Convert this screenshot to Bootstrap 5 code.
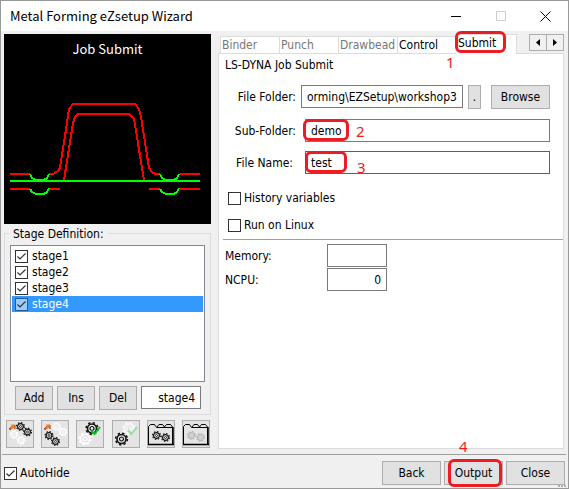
<!DOCTYPE html>
<html lang="en">
<head>
<meta charset="utf-8">
<meta name="viewport" content="width=device-width, initial-scale=1">
<title>Metal Forming eZsetup Wizard</title>
<link rel="stylesheet" href="https://cdn.jsdelivr.net/npm/bootstrap@5.3.0/dist/css/bootstrap.min.css">
<style>
body { font: 12px/16px "DejaVu Sans Condensed", "Noto Sans", sans-serif; color: #000; background: #f0f0f0; }
.wizard { border: 1px solid #999; padding-bottom: 3px; }
.titlebar { height: 30px; background: #fff; font: 13px/16px "Noto Sans CJK SC", sans-serif; padding-left: 9px; }
.titlebar button { width: 45px; height: 28px; }
.titlebar svg { display: block; margin: auto; }
.body-row { padding: 3px 4px 5px 3px; gap: 7px; }
.side { flex: 0 0 207px; }
.preview { background: #000; height: 190px; }
.heading { color: #fff; font: 13px/16px "Noto Sans CJK SC", sans-serif; top: 7px; }
.stage-box { border: 1px solid #dcdcdc; margin-top: 9px; padding: 11px 5px 4px; }
.stage-box legend { position: absolute; float: none; width: auto; top: -8px; left: 4px; padding: 0 4px; background: #f0f0f0; font-size: 12px; line-height: 16px; margin: 0; }
.stage-list { border: 1px solid #828790; background: #fff; height: 137px; padding: 2px 1px; }
.stage-list label { height: 16px; padding-left: 3px; gap: 4px; }
.stage-list label.picked { background: #3399ff; color: #fff; }
.tick { appearance: none; width: 13px; height: 13px; border: 1px solid #333; background: #fff; margin: 0; flex: none; }
.tick:checked { background: #fff url("data:image/svg+xml,%3Csvg xmlns='http://www.w3.org/2000/svg' viewBox='0 0 11 11'%3E%3Cpath d='M1.5 5.5 4 8 9.5 2.5' fill='none' stroke='%23333' stroke-width='1.2'/%3E%3C/svg%3E") center/11px no-repeat; }
.picked .tick:checked { background-color: #99ccff; border-color: #1f5c99; }
.stage-keys { padding: 0 4px 0 5px; }
.key { border: 1px solid #adadad; background: #e1e1e1; color: #000; height: 24px; padding: 0; line-height: 16px; font-size: 12px; border-radius: 0; text-align: center; }
.key.small-key { width: 38px; }
.key.wide-key { width: 59px; }
.key.dot-key { width: 13px; flex: none; margin: 0 10px 0 5px; }
.entry { border: 1px solid #7a7a7a; background: #fff; height: 23px; padding: 0 5px; line-height: 16px; font-size: 12px; color: #000; min-width: 0; border-radius: 0; outline: 0; }
.entry.narrow { width: 60px; }
.entry.active { border-color: #0078d7; }
.tools { padding: 5px 1px 0 2px; }
.tools button { width: 28px; height: 28px; border: 1px solid #adadad; background: #e4e4e4; padding: 0; }
.tools svg { display: block; margin: -1px; }
.tabstrip { height: 19px; padding-left: 2px; }
.tabstrip .tab { width: 59px; height: 17px; border: 1px solid #dcdcdc; border-bottom: 0; border-right: 0; background: #fff; color: #777; padding: 0 0 0 1px; text-align: left; line-height: 16px; }
.tabstrip .tab.ready { color: #000; }
.tabstrip .tab.current { color: #000; width: 61px; height: 20px; border-left: 0; border-right: 1px solid #dcdcdc; padding-left: 2px; padding-bottom: 3px; }
.scroller button { width: 18px; height: 17px; border: 1px solid #adadad; background: #f0f0f0; padding: 0; }
.scroller button + button { margin-left: -1px; }
.scroller svg { display: block; margin: auto; }
.page { border: 1px solid #dcdcdc; background: #fff; }
.form-area { padding: 3px 13px 0 6px; }
.form-grid { display: grid; grid-template-columns: 71px 1fr; column-gap: 5px; margin-top: 12px; }
.form-grid > label { text-align: right; align-self: start; margin-top: 4px; }
.form-grid .name { padding-right: 3px; }
.folder-row { height: 34px; }
.field-row { height: 32px; padding-left: 4px; }
.tick-row { gap: 3px; height: 16px; }
.tick-row.first { margin: 7px 0 0 3px; }
.tick-row.second { margin: 11px 0 6px 3px; }
.rule { height: 1px; background: #a0a0a0; }
.figures { display: grid; grid-template-columns: 102px 60px; row-gap: 1px; margin: 4px 0 0 6px; }
.footer-bar { border-top: 1px solid #a0a0a0; margin: 0 2px 0 1px; padding: 6px 1px 0 2px; gap: 3px; }
.ring { position: absolute; border: 3px solid #ed1c24; border-radius: 6px; pointer-events: none; }
.num { position: absolute; color: #ed1c24; font: 15px/16px "Noto Sans", sans-serif; pointer-events: none; }
.ring-submit { left: -1px; top: -3px; width: 51px; height: 22px; }
.ring-demo { left: 2px; top: 0; width: 46px; height: 22px; }
.ring-test { left: 4px; top: 0; width: 42px; height: 22px; }
.ring-output { left: 4px; top: -2px; width: 54px; height: 28px; }
.n1 { left: -10px; top: 20px; }
.n2 { left: 55px; top: 4px; }
.n3 { left: 56px; top: 8px; }
.n4 { left: 15px; top: -23px; }
.grip { right: 0; bottom: -2px; }
</style>
<script src="https://cdn.jsdelivr.net/npm/bootstrap@5.3.0/dist/js/bootstrap.bundle.min.js"></script>
</head>
<body>
<svg width="0" height="0" class="position-absolute" aria-hidden="true">
  <defs>
    <g id="gear" fill="none" stroke="currentColor">
      <circle r="2.9" stroke-width="1.2"/>
      <circle r="3.9" stroke-width="1.2" stroke-dasharray="1.53 1.53"/>
      <circle r="1" stroke-width=".8"/>
    </g>
    <g id="cog" fill="none" stroke="currentColor">
      <circle r="4.5" stroke-width="1.6"/>
      <circle r="5.9" stroke-width="1.5" stroke-dasharray="2.3 2.33"/>
      <circle r="2" stroke-width="1.2"/>
    </g>
    <g id="dart">
      <path d="M3.5 9.5 6.5 6.5" stroke="#a03020" stroke-width="2"/>
      <path d="M4.5 4.5H9V9L7.500 8 5.500 9.500 4 8 6 6Z" fill="#f58220"/>
      <path d="M9 5v4" stroke="#b04010"/>
    </g>
    <g id="binder" fill="none" stroke="#000">
      <path d="M1.500 24V6.500L3.500 4.500H7.500L9.500 7.500H26M10 7 12 4.500H15.500L17.500 7 19.500 4.500H23.500L25.500 7V24"/>
      <path d="M1 24.500H27M26 7V25" stroke-width="1.500"/>
    </g>
  </defs>
</svg>
<main class="wizard min-vh-100 d-flex flex-column">
  <header class="titlebar d-flex align-items-center">
    <span class="flex-grow-1">Metal Forming eZsetup Wizard</span>
    <button class="border-0 bg-transparent p-0" aria-label="Minimize"><svg width="10" height="10"><path d="M0 5.500h10" stroke="#000"/></svg></button>
    <button class="border-0 bg-transparent p-0" aria-label="Maximize" disabled><svg width="10" height="10"><path d="M.5.5h9v9h-9z" fill="none" stroke="#ccc"/></svg></button>
    <button class="border-0 bg-transparent p-0" aria-label="Close window"><svg width="11" height="11"><path d="M.5.5l10 10M10.500.5l-10 10" stroke="#000"/></svg></button>
  </header>

  <div class="body-row d-flex flex-grow-1">
    <section class="side">
      <div class="preview position-relative">
        <div class="heading position-absolute w-100 text-center">Job Submit</div>
        <svg class="d-block" width="207" height="190" viewBox="4 34 207 190" fill="none" stroke="#f00" stroke-width="2" shape-rendering="crispEdges">
          <path d="M49 174H53L58 171 60 168 61 161 67 123 69 109 73 104H135L139 109 141 117 149 168 152 172 155 174H160"/>
          <path d="M64 180 73 123 75 117 78 114H129L134 119 135 125 144 180"/>
          <path d="M10 174H30M180 174H200M10 189H30M49 189H60M149 189H160M180 189H200"/>
          <path d="M10 181H200M30 174l2 4 4 2h8l3-2 2-4M160 174l2 4 4 2h8l3-2 2-4M30 189l2 3 4 2h8l3-2 2-4M160 189l2 3 4 2h8l3-2 2-4" stroke="#0f0"/>
        </svg>
      </div>
      <fieldset class="stage-box position-relative">
        <legend>Stage Definition:</legend>
        <div class="stage-list">
          <label class="d-flex align-items-center"><input class="tick" type="checkbox" checked>stage1</label>
          <label class="d-flex align-items-center"><input class="tick" type="checkbox" checked>stage2</label>
          <label class="d-flex align-items-center"><input class="tick" type="checkbox" checked>stage3</label>
          <label class="d-flex align-items-center picked"><input class="tick" type="checkbox" checked>stage4</label>
        </div>
        <div class="stage-keys d-flex gap-1 mt-1">
          <button class="key small-key">Add</button>
          <button class="key small-key">Ins</button>
          <button class="key small-key">Del</button>
          <input class="entry narrow text-end" aria-label="Stage name" value="stage4">
        </div>
      </fieldset>
      <div class="tools d-flex justify-content-between">
        <button aria-label="Move stage up"><svg width="28" height="28"><use href="#dart"/><g color="#fff"><use href="#gear" x="8" y="14.500"/><use href="#gear" x="15" y="20.500"/></g><g color="#111"><use href="#gear" x="14.500" y="6.500"/><use href="#gear" x="21.500" y="12"/></g></svg></button>
        <button aria-label="Move stage down"><svg width="28" height="28"><use href="#dart"/><g color="#fff"><use href="#gear" x="15.500" y="6.500"/><use href="#gear" x="22" y="12"/></g><g color="#111"><use href="#gear" x="8" y="15.500"/><use href="#gear" x="14.500" y="21.500"/></g></svg></button>
        <button aria-label="Check upper gear"><svg width="28" height="28"><use href="#cog" x="9" y="19" color="#fff"/><use href="#cog" x="16" y="8.500" color="#111"/><path d="M15 10.500 18.500 14 24 7" fill="none" stroke="#00c81e" stroke-width="2"/></svg></button>
        <button aria-label="Check lower gear"><svg width="28" height="28"><use href="#cog" x="17" y="8.500" color="#fafafa"/><use href="#cog" x="9.500" y="19" color="#111"/><path d="M16 10.500 19.500 14 25 7" fill="none" stroke="#96dca2" stroke-width="2"/></svg></button>
        <button aria-label="Open set"><svg width="28" height="28"><use href="#binder"/><g color="#111"><use href="#gear" x="9.500" y="15.500"/><use href="#gear" x="18.500" y="17.500"/></g></svg></button>
        <button aria-label="Close set"><svg width="28" height="28"><use href="#binder"/><g color="#b4b4b4"><use href="#gear" x="9.500" y="15.500"/><use href="#gear" x="18.500" y="17.500"/></g></svg></button>
      </div>
    </section>

    <section class="flex-grow-1 d-flex flex-column">
      <div class="tabstrip d-flex align-items-end">
        <button class="tab" disabled>Binder</button>
        <button class="tab" disabled>Punch</button>
        <button class="tab" disabled>Drawbead</button>
        <button class="tab ready">Control</button>
        <div class="position-relative align-self-start">
          <button class="tab current d-block">Submit</button>
          <span class="ring ring-submit"></span><span class="num n1">1</span>
        </div>
        <div class="scroller ms-auto d-flex align-self-start">
          <button aria-label="Previous tab"><svg width="4" height="7"><path d="M4 0v7L0 3.500z"/></svg></button>
          <button aria-label="Next tab"><svg width="4" height="7"><path d="M0 0v7l4-3.500z"/></svg></button>
        </div>
      </div>
      <div class="page flex-grow-1">
        <div class="form-area">
          <div>LS-DYNA Job Submit</div>
          <div class="form-grid">
            <label for="folder">File Folder:</label>
            <div class="folder-row d-flex">
              <input id="folder" class="entry flex-grow-1" value="orming\EZSetup\workshop3">
              <button class="key dot-key" aria-label="Pick folder">.</button>
              <button class="key wide-key flex-shrink-0">Browse</button>
            </div>
            <label for="sub">Sub-Folder:</label>
            <div class="field-row position-relative">
              <input id="sub" class="entry d-block w-100" value="demo">
              <span class="ring ring-demo"></span><span class="num n2">2</span>
            </div>
            <label for="fname" class="name">File Name:</label>
            <div class="field-row position-relative">
              <input id="fname" class="entry active d-block w-100" value="test">
              <span class="ring ring-test"></span><span class="num n3">3</span>
            </div>
          </div>
          <label class="tick-row first d-flex align-items-center"><input class="tick" type="checkbox">History variables</label>
          <label class="tick-row second d-flex align-items-center"><input class="tick" type="checkbox">Run on Linux</label>
        </div>
        <div class="rule ms-1"></div>
        <div class="figures align-items-center">
          <label for="memory">Memory:</label><input id="memory" class="entry narrow text-end">
          <label for="ncpu">NCPU:</label><input id="ncpu" class="entry narrow text-end" value="0">
        </div>
      </div>
    </section>
  </div>

  <footer class="footer-bar d-flex align-items-center position-relative">
    <label class="tick-row d-flex align-items-center me-auto"><input class="tick" type="checkbox" checked>AutoHide</label>
    <button class="key wide-key">Back</button>
    <div class="position-relative">
      <button class="key wide-key d-block">Output</button>
      <span class="ring ring-output"></span><span class="num n4">4</span>
    </div>
    <button class="key wide-key">Close</button>
    <svg class="grip position-absolute" width="8" height="2" aria-hidden="true"><path d="M0 1h8" stroke="#b0b0b0" stroke-width="2" stroke-dasharray="2 1"/></svg>
  </footer>
</main>
<script>
const folder = document.getElementById("folder");
folder.scrollLeft = folder.scrollWidth;
const fileName = document.getElementById("fname");
fileName.focus();
fileName.setSelectionRange(4, 4);
</script>
</body>
</html>
